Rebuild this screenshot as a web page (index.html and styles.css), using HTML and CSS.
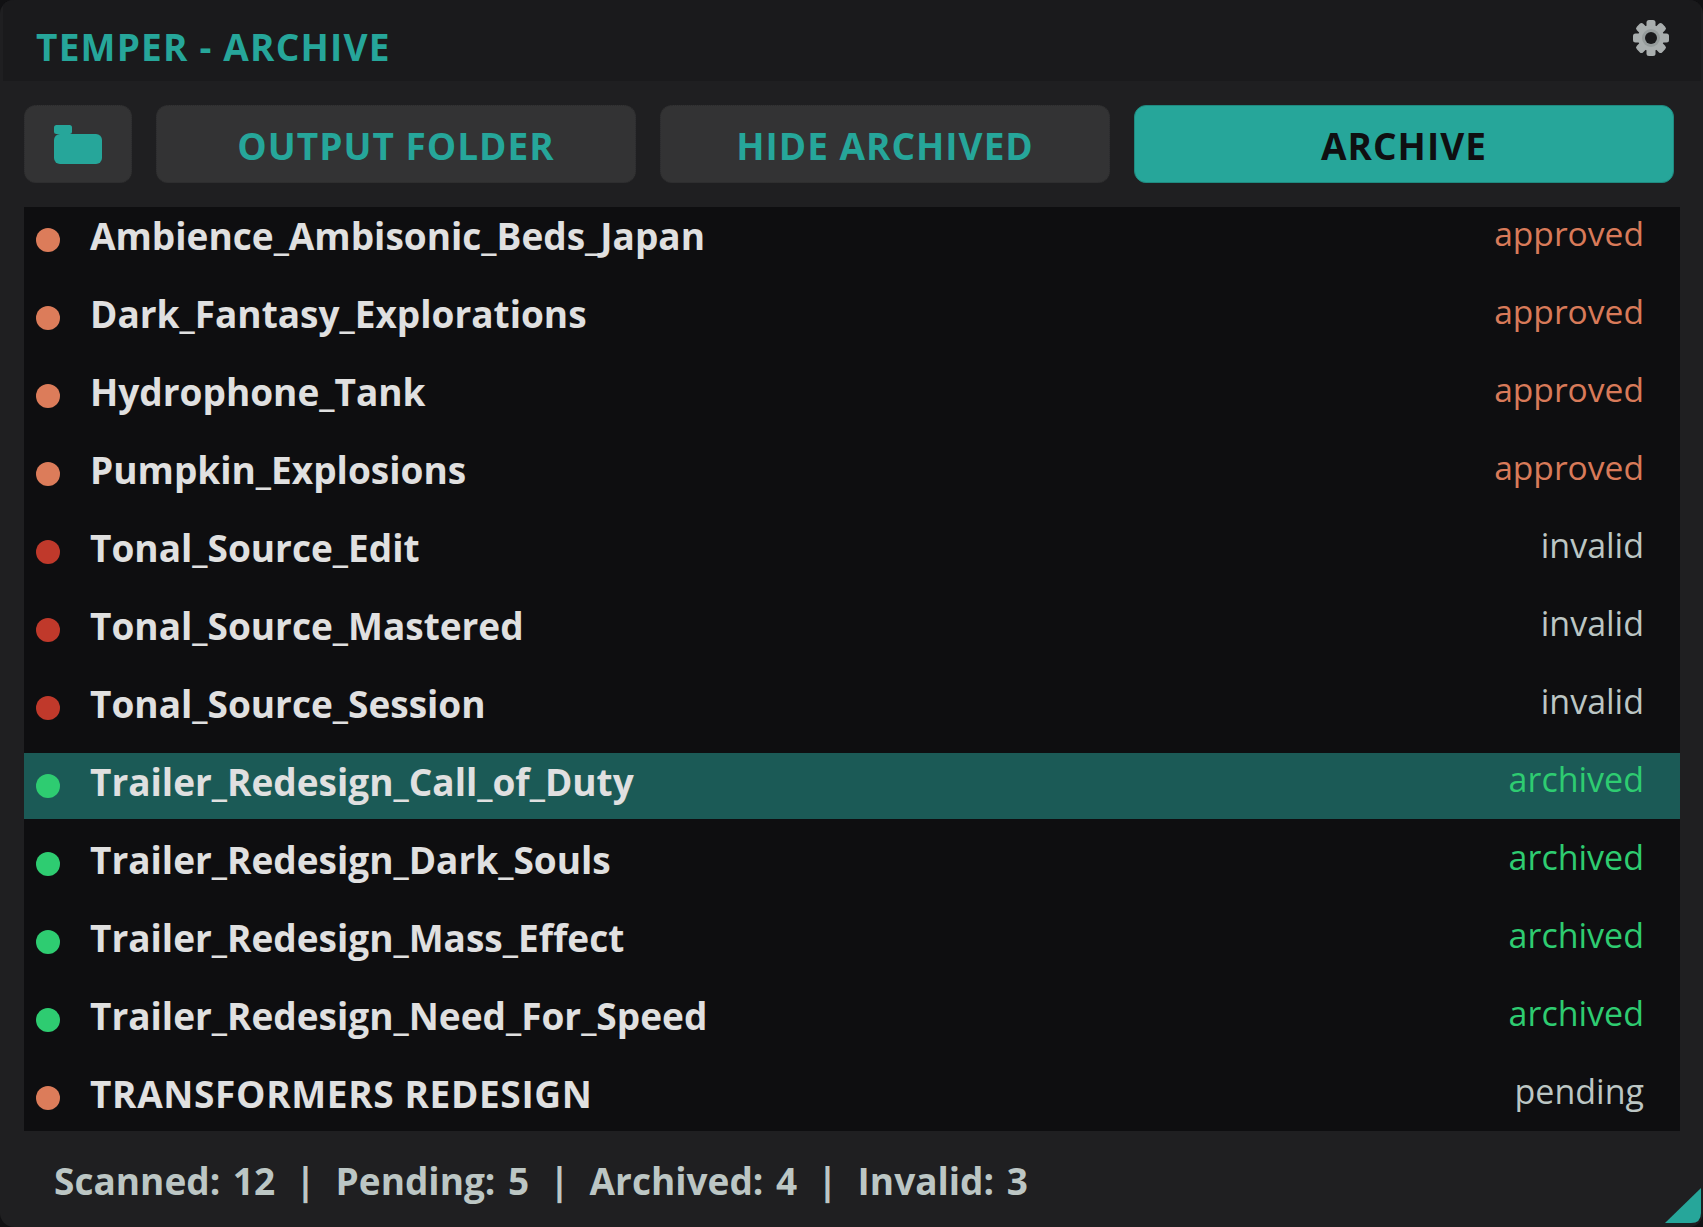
FILE: index.html
```html
<!DOCTYPE html>
<html lang="en">
<head>
    <meta charset="UTF-8">
    <meta name="viewport" content="width=device-width, initial-scale=1.0">
    <title>Temper - Archive</title>
    <link rel="stylesheet" href="styles.css">
</head>
<body>
    <div class="window">
        <header class="title-bar">
            <h1>TEMPER - ARCHIVE</h1>
            <svg class="gear" viewBox="0 0 36 36" width="36" height="36">
                <g fill="#a9aeae">
                    <rect x="13.5" y="0" width="9" height="36" rx="2.5"/>
                    <rect x="13.5" y="0" width="9" height="36" rx="2.5" transform="rotate(45 18 18)"/>
                    <rect x="13.5" y="0" width="9" height="36" rx="2.5" transform="rotate(90 18 18)"/>
                    <rect x="13.5" y="0" width="9" height="36" rx="2.5" transform="rotate(135 18 18)"/>
                    <circle cx="18" cy="18" r="13"/>
                </g>
                <circle cx="18" cy="18" r="9" fill="#969c9c"/>
                <circle cx="18" cy="18" r="6" fill="#1a1a1c"/>
            </svg>
        </header>

        <div class="toolbar">
            <button class="btn btn-icon">
                <svg viewBox="0 0 48 40" width="48" height="40">
                    <rect x="0" y="0" width="18" height="9" rx="2.5" fill="#26a69a"/>
                    <rect x="0" y="9" width="48" height="30" rx="6" fill="#26a69a"/>
                </svg>
            </button>
            <button class="btn btn-output">OUTPUT FOLDER</button>
            <button class="btn btn-hide">HIDE ARCHIVED</button>
            <button class="btn btn-primary">ARCHIVE</button>
        </div>

        <div class="list">
            <div class="row"><span class="dot approved"></span><span class="name">Ambience_Ambisonic_Beds_Japan</span><span class="state approved-text">approved</span></div>
            <div class="row"><span class="dot approved"></span><span class="name">Dark_Fantasy_Explorations</span><span class="state approved-text">approved</span></div>
            <div class="row"><span class="dot approved"></span><span class="name">Hydrophone_Tank</span><span class="state approved-text">approved</span></div>
            <div class="row"><span class="dot approved"></span><span class="name">Pumpkin_Explosions</span><span class="state approved-text">approved</span></div>
            <div class="row"><span class="dot invalid"></span><span class="name">Tonal_Source_Edit</span><span class="state">invalid</span></div>
            <div class="row"><span class="dot invalid"></span><span class="name">Tonal_Source_Mastered</span><span class="state">invalid</span></div>
            <div class="row"><span class="dot invalid"></span><span class="name">Tonal_Source_Session</span><span class="state">invalid</span></div>
            <div class="row selected"><span class="dot archived"></span><span class="name">Trailer_Redesign_Call_of_Duty</span><span class="state archived-text">archived</span></div>
            <div class="row"><span class="dot archived"></span><span class="name">Trailer_Redesign_Dark_Souls</span><span class="state archived-text">archived</span></div>
            <div class="row"><span class="dot archived"></span><span class="name">Trailer_Redesign_Mass_Effect</span><span class="state archived-text">archived</span></div>
            <div class="row"><span class="dot archived"></span><span class="name">Trailer_Redesign_Need_For_Speed</span><span class="state archived-text">archived</span></div>
            <div class="row"><span class="dot approved"></span><span class="name caps">TRANSFORMERS REDESIGN</span><span class="state">pending</span></div>
        </div>

        <footer class="status">
            <span>Scanned: 12</span><span>|</span><span>Pending: 5</span><span>|</span><span>Archived: 4</span><span>|</span><span>Invalid: 3</span>
        </footer>

        <svg class="grip" viewBox="0 0 36 35" width="36" height="35">
            <path fill="#26a69a" d="M36 0V25Q36 35 26 35H0z"/>
        </svg>
    </div>
</body>
</html>
```

FILE: styles.css
```css
* {
    box-sizing: border-box;
}

html, body {
    margin: 0;
    padding: 0;
    background-color: #111113;
}

body {
    font-family: "Open Sans", "Noto Sans", sans-serif;
    color: #e0e0e0;
    width: 1703px;
    height: 1227px;
    overflow: hidden;
}

.window {
    position: relative;
    height: 1227px;
    background-color: #1f1f21;
    border-radius: 14px;
    overflow: hidden;
}

.title-bar {
    height: 81px;
    margin: 0 2px 0 3px;
    padding: 0 32px 0 33px;
    background-color: #1a1a1c;
    display: flex;
    justify-content: space-between;
    align-items: flex-start;
}

.title-bar h1 {
    margin: 0;
    padding-top: 23px;
    font-size: 37px;
    line-height: 48px;
    font-weight: 700;
    letter-spacing: 1.2px;
    color: #26a69a;
}

.gear {
    margin-top: 20px;
}

.toolbar {
    display: flex;
    gap: 24px;
    padding: 24px 29px 24px 24px;
}

.btn {
    height: 78px;
    border: 1px dotted #2b2b2c;
    border-radius: 12px;
    background-color: #333334;
    color: #26a69a;
    font-family: inherit;
    font-size: 37px;
    font-weight: 700;
    letter-spacing: 1px;
    padding: 2px 0 0;
    display: flex;
    align-items: center;
    justify-content: center;
}

.btn-icon {
    width: 108px;
}

.btn-output {
    width: 480px;
}

.btn-hide {
    width: 450px;
}

.btn-primary {
    width: 540px;
    background-color: #26a69a;
    border: 1px solid #1f8a80;
    color: #0f0f11;
}

.list {
    margin: 0 23px 0 24px;
    height: 924px;
    background-color: #0e0e10;
    display: flex;
    flex-direction: column;
    gap: 12px;
}

.row {
    height: 66px;
    flex: none;
    display: flex;
    align-items: center;
    padding: 0 36px 0 12px;
}

.row.selected {
    background-color: #1b5a56;
}

.dot {
    width: 24px;
    height: 24px;
    border-radius: 50%;
    flex: none;
}

.dot.approved {
    background-color: #dc7c5a;
}

.dot.invalid {
    background-color: #c0392b;
}

.dot.archived {
    background-color: #2ecc71;
}

.name {
    margin-left: 30px;
    font-size: 37px;
    font-weight: 700;
    line-height: 48px;
    margin-top: -8px;
    flex: 1;
}

.name.caps {
    letter-spacing: 0.65px;
}

.state {
    font-size: 34px;
    line-height: 48px;
    margin-top: -14px;
    color: #bcc6c4;
    font-weight: 400;
}

.approved-text {
    color: #d87a59;
    font-size: 33.6px;
}

.archived-text {
    color: #2ecc71;
}

.status {
    display: flex;
    gap: 20px;
    padding: 26px 0 0 54px;
    font-size: 37px;
    font-weight: 700;
    line-height: 48px;
    word-spacing: 3px;
    color: #bcc6c4;
}

.grip {
    position: absolute;
    right: 2px;
    bottom: 4px;
}
```
